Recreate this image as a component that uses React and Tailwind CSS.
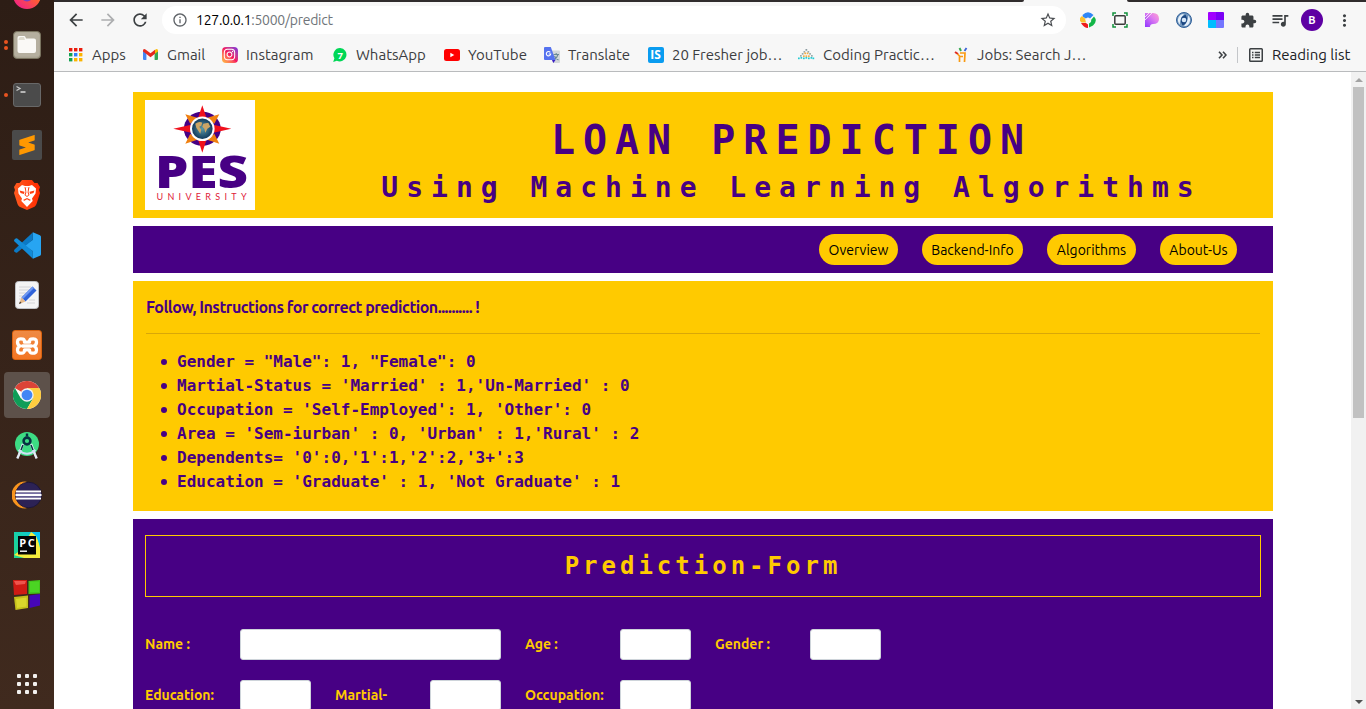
import React from "react";
import { MdArrowBack, MdArrowForward, MdRefresh, MdInfoOutline, MdStarBorder, MdExtension, MdQueueMusic, MdMoreVert } from "react-icons/md";
import { SiBrave, SiXampp, SiSublimetext } from "react-icons/si";
import { FaInstagram } from "react-icons/fa";

const UI = "font-['Ubuntu','Open_Sans',sans-serif]";
const MONO = "font-['DejaVu_Sans_Mono',monospace]";

/* ---------- Dock ---------- */

function DockItem({ dots = 0, active = false, children }) {
  return (
    <div className="flex h-[50px] w-[54px] shrink-0 items-center">
      <div className="flex w-1 flex-col items-end gap-[2px]">
        {Array.from({ length: dots }).map((_, i) => (
          <span key={i} className="-mr-[4px] size-1 rounded-full bg-[#e95420]" />
        ))}
      </div>
      <div className={active ? "-z-0 flex size-[46px] items-center justify-center rounded-[4px] bg-[#5d514a]" : "flex size-[46px] items-center justify-center"}>
        {children}
      </div>
    </div>
  );
}

function ChromeLogo() {
  return (
    <svg width="28" height="28" viewBox="0 0 48 48">
      <circle cx="24" cy="24" r="24" fill="#fff" />
      <path d="M24 24L3.2 12A24 24 0 0 1 44.8 12H24Z" fill="#db4437" />
      <path d="M3.2 12A24 24 0 0 0 24 48L34.4 30L24 24L13.6 30Z" fill="#0f9d58" />
      <path d="M24 48A24 24 0 0 0 44.8 12H24L34.4 30Z" fill="#ffcd40" />
      <circle cx="24" cy="24" r="11.5" fill="#f1f1f1" />
      <circle cx="24" cy="24" r="9.2" fill="#4285f4" />
    </svg>
  );
}

function Dock() {
  return (
    <aside className="flex h-full w-[54px] shrink-0 flex-col overflow-hidden bg-linear-to-b from-[#2d1d15] to-[#402a1e]">
      <div className="flex h-5 shrink-0 items-end justify-center pb-[11px]">
        <svg width="28" height="28" viewBox="0 0 28 28">
          <defs>
            <linearGradient id="ff" x1="1" y1="0" x2="0.2" y2="1">
              <stop offset="0" stopColor="#ffd43a" />
              <stop offset="0.5" stopColor="#ff5a36" />
              <stop offset="1" stopColor="#f0208a" />
            </linearGradient>
          </defs>
          <circle cx="14" cy="14" r="14" fill="url(#ff)" />
          <circle cx="14" cy="14.500" r="6" fill="#7542c5" />
        </svg>
      </div>
      <DockItem dots={2}>
        <svg width="28" height="28" viewBox="0 0 28 28">
          <rect x="0.500" y="0.500" width="27" height="27" rx="3.500" fill="#aaa493" stroke="#79735f" />
          <rect x="1.500" y="1.500" width="25" height="24" rx="3" fill="#b5af9f" />
          <path d="M6 5h5q1 0 1.500 1.200L13 7.500h8q2 0 2 2V20q0 2-2 2H6.500Q4.500 22 4.500 20V7Q4.500 5 6 5Z" fill="#faf9f6" />
          <path d="M5.500 8.500Q5.500 6 7.500 6H11L12 9H5.500Z" fill="#dfdccf" />
        </svg>
      </DockItem>
      <DockItem dots={1}>
        <svg width="28" height="26" viewBox="0 0 28 26">
          <rect x="0.500" y="1.500" width="27" height="23" rx="2.500" fill="#4b4b4b" stroke="#686868" />
          <path d="M3.500 4.500L7 6.500L3.500 8.500" fill="none" stroke="#c8c8c8" strokeWidth="1.300" />
          <path d="M7.500 10h5" stroke="#fff" strokeWidth="1.200" />
        </svg>
      </DockItem>
      <DockItem>
        <div className="flex size-[30px] items-center justify-center rounded-[2px] bg-[#4a4a4a]">
          <SiSublimetext size={20} color="#ff9800" />
        </div>
      </DockItem>
      <DockItem>
        <svg width="26" height="30" viewBox="0 0 26 30">
          <defs>
            <linearGradient id="br" x1="0" x2="1">
              <stop offset="0" stopColor="#ff5a1f" />
              <stop offset="1" stopColor="#ff2b00" />
            </linearGradient>
          </defs>
          <path d="M8 0h10l2.500 3L23.500 3L26 7l-1 3l1 3l-3.500 11q-.6 1.700-2 2.700L13 30l-7.500-3.300q-1.400-1-2-2.700L0 13l1-3L0 7l2.500-4l3 0Z" fill="url(#br)" />
          <path d="M4 8.500L8 5l3 1h4l3-1l4 3.500l-.5 5l-3.500 5l.7 2.500L13 27l-5.700-6l.7-2.500l-3.500-5Z" fill="#fff" />
          <path d="M5.500 10.500l5 1.200l-.5 2.300l-3.500-1ZM20.500 10.500l-5 1.200l.5 2.300l3.500-1ZM10.500 7l2.500 1l2.500-1l-1 5l1 3l-2.500 2l-2.500-2l1-3ZM9 20l4-2l4 2l-1.500.8L13 19.300l-2.500 1.500Z" fill="#ff4012" />
          <path d="M11.800 7.500L13 8l1.200-.5l-.6 5l.8 2.500L13 16l-1.400-1l.8-2.500Z" fill="#fff" />
        </svg>
      </DockItem>
      <DockItem>
        <svg width="27" height="27" viewBox="0 0 100 100">
          <path d="M70 1L96 12Q100 14 100 18V82Q100 86 96 88L70 99V71L37 50L70 29Z" fill="#27a5f2" />
          <path d="M70 1V29L12 76Q9 78 6 76L1 71Q-1 68 2 65Z" fill="#0b79c5" />
          <path d="M70 99V71L12 24Q9 22 6 24L1 29Q-1 32 2 35Z" fill="#128bd8" />
        </svg>
      </DockItem>
      <DockItem>
        <svg width="24" height="28" viewBox="0 0 24 28">
          <rect x="0.500" y="0.500" width="23" height="27" rx="3" fill="#f4f4f5" stroke="#bfc1c6" />
          <path d="M4 6h12M4 9h11M4 12h8M4 15h6M4 18h5M12 22h8M14 19h6" stroke="#d4d4d8" strokeWidth="1" />
          <path d="M17.500 5.500L21.500 9.500L10.500 20.500L6.500 16.500Z" fill="#2f62d9" />
          <path d="M17.500 5.500L19 7L8 18L6.500 16.500Z" fill="#6f98f2" />
          <path d="M6.500 16.500L10.500 20.500L4 23Z" fill="#e7b98a" />
          <path d="M5 20.500L6.500 22L4 23Z" fill="#333" />
        </svg>
      </DockItem>
      <DockItem>
        <div className="flex size-[30px] items-center justify-center rounded-[3px] border border-[#d9620f] bg-linear-to-b from-[#ef8a43] to-[#f37623] pt-px">
          <svg width="24" height="22" viewBox="0 0 24 22">
            <path d="M8 4.200Q2.500 3 2.500 7Q2.500 10 5 11Q2.500 12 2.500 15Q2.500 19 8 17.800Q9.500 17.400 9.500 14.800H14.500Q14.500 17.400 16 17.800Q21.500 19 21.500 15Q21.500 12 19 11Q21.500 10 21.500 7Q21.500 3 16 4.200Q14.500 4.600 14.500 7.200H9.500Q9.500 4.600 8 4.200ZM7.500 11H16.500" fill="none" stroke="#fff" strokeWidth="3.300" strokeLinejoin="round" strokeLinecap="round" />
          </svg>
        </div>
      </DockItem>
      <DockItem dots={1} active>
        <ChromeLogo />
      </DockItem>
      <DockItem>
        <svg width="26" height="28" viewBox="0 0 26 28">
          <circle cx="13" cy="13" r="12" fill="#3ddc84" />
          <path d="M9 13L5 23.500L3.300 27.500M17 13L21 23.500L22.700 27.500" stroke="#e4ecf7" strokeWidth="2.400" fill="none" />
          <path d="M4.500 19Q13 26.500 21.500 19" stroke="#d0e0f5" strokeWidth="2" fill="none" />
          <path d="M11.800 2.500h2.400v3h-2.400Z" fill="#073042" />
          <circle cx="13" cy="10" r="3.400" fill="#3ddc84" stroke="#073042" strokeWidth="2.600" />
          <path d="M9 14L7 19M17 14L19 19" stroke="#073042" strokeWidth="1.500" />
        </svg>
      </DockItem>
      <DockItem>
        <svg width="30" height="28" viewBox="0 0 30 28">
          <path d="M13 .5A13.500 13.500 0 0 0 13 27.500L15 27A16 16 0 0 1 15 1Z" fill="#f7941e" />
          <ellipse cx="16.500" cy="14" rx="13" ry="12.800" fill="#2c2255" stroke="#181338" strokeWidth="0.800" />
          <path d="M4 10.500H29M3.500 14H29.500M4 17.500H29" stroke="#fff" strokeWidth="1.900" />
          <path d="M4 12.300H29M4 15.800H29" stroke="#7770a5" strokeWidth="1.200" />
        </svg>
      </DockItem>
      <DockItem>
        <svg width="26" height="26" viewBox="0 0 26 26">
          <defs>
            <linearGradient id="pc" x1="0" y1="1" x2="1" y2="0">
              <stop offset="0" stopColor="#21d789" />
              <stop offset="0.550" stopColor="#16cfae" />
              <stop offset="1" stopColor="#07c3f2" />
            </linearGradient>
          </defs>
          <rect width="26" height="26" fill="url(#pc)" />
          <path d="M17 0L23 4L26 16V26H10L0 23L7 18Z" fill="#f5ed3c" />
          <path d="M18 0H26V13L22 4Z" fill="#07c3f2" />
          <rect x="4" y="4" width="18" height="18.500" fill="#050505" />
          <rect x="6" y="18.500" width="7" height="1.400" fill="#fff" />
          <text x="5.200" y="14.500" fontSize="11" fontWeight="700" textLength="15.500" fill="#fff" className="font-['Open_Sans',sans-serif]">PC</text>
        </svg>
      </DockItem>
      <DockItem>
        <svg width="28" height="30" viewBox="0 0 28 30">
          <path d="M0 0L14 0V14L1 15Z" fill="#cf1b14" />
          <path d="M1 1L13 1L12 4L3 5Z" fill="#ef554c" />
          <path d="M15.500 1L27 0V13.500L15.500 14Z" fill="#43c51c" />
          <path d="M17 2L26 1.500V12L17 12Z" fill="#4bd523" />
          <path d="M1 17L15 15.500V28L2.500 30Z" fill="#c3bf1b" />
          <path d="M3 19L13.500 17.500V26.500L4 28Z" fill="#d9d62c" />
          <path d="M16.500 15.500L27 14V25.500L16.500 28Z" fill="#4606b8" />
        </svg>
      </DockItem>
      <div className="mt-auto flex justify-center pb-[15px]">
        <div className="grid grid-cols-3 gap-x-[4px] gap-y-[4px]">
          {Array.from({ length: 9 }).map((_, i) => (
            <span key={i} className="size-[4px] rounded-[1px] bg-[#f2f0ee]" />
          ))}
        </div>
      </div>
    </aside>
  );
}

/* ---------- Browser chrome ---------- */

function Slot({ children }) {
  return <div className="flex w-8 shrink-0 items-center justify-center">{children}</div>;
}

function Toolbar() {
  return (
    <div className="flex h-[36px] items-center pl-[6px]">
      <Slot><MdArrowBack size={20} color="#3c4043" /></Slot>
      <Slot><MdArrowForward size={20} color="#adaeb0" /></Slot>
      <Slot><MdRefresh size={20} color="#3c4043" /></Slot>
      <div className="ml-[6px] flex h-7 w-[904px] shrink-0 items-center rounded-full bg-white pr-[9px] pl-[10px]">
        <MdInfoOutline size={16} color="#5f6368" />
        <span className={`${UI} ml-[8px] text-[14px] leading-5 tracking-[-0.270px] text-[#70757a]`}>
          <span className="text-black">127.0.0.1</span>:5000/predict
        </span>
        <MdStarBorder className="ml-auto" size={18} color="#4a4d51" />
      </div>
      <div className="ml-[6px] flex">
        <Slot>
          <svg width="16" height="16" viewBox="0 0 16 16">
            <path d="M2.500 3Q8-2.500 13.500 3L10 6.500Q8 4.500 6 6.500L3 5Z" fill="#2f86f6" />
            <path d="M14 4.500Q18 9 13 13.500L9 15.500V11.500Q12 10 11 8Z" fill="#12b648" />
            <path d="M0 6Q-.5 9 1.500 10.500H6L5 6.500L2 4Z" fill="#fbc02d" />
            <path d="M1 11H6L8 12.500V16Q4 16 1 11Z" fill="#ef1b1b" />
          </svg>
        </Slot>
        <Slot>
          <svg width="16" height="16" viewBox="0 0 16 16" fill="none">
            <path d="M1 4V1H4M12 1H15V4M15 12V15H12M4 15H1V12" stroke="#12923c" strokeWidth="1.500" />
            <rect x="2.800" y="3.800" width="10.400" height="8.400" rx="1" stroke="#3b3b3b" strokeWidth="1.500" />
          </svg>
        </Slot>
        <Slot>
          <svg width="16" height="16" viewBox="0 0 16 16">
            <defs>
              <linearGradient id="pk" x1="0" y1="1" x2="1" y2="0">
                <stop offset="0" stopColor="#8f35ff" />
                <stop offset="0.600" stopColor="#df7df0" />
                <stop offset="1" stopColor="#ffa2cf" />
              </linearGradient>
            </defs>
            <path d="M1 1H9Q15 1 15 7Q15 12 9 12Q6 12 6 15H1Z" fill="url(#pk)" />
            <path d="M1 5L5 1M1 8L8 1" stroke="#f7f7f7" strokeWidth="0.800" />
          </svg>
        </Slot>
        <Slot>
          <svg width="16" height="16" viewBox="0 0 16 16">
            <circle cx="8" cy="8" r="7.500" fill="#7196bd" stroke="#2f5f99" />
            <path d="M8 2A6 6 0 0 0 4 12.500Q3 8 8 2ZM8 14A6 6 0 0 0 12 3.500Q13 8 8 14Z" fill="#e6f0fa" />
            <path d="M9.500 2.500Q2 6 6.500 13.500Q14 10 9.500 2.500Z" fill="#194682" />
            <circle cx="8" cy="8" r="2.300" fill="#d6e6f7" />
          </svg>
        </Slot>
        <Slot>
          <div className="grid size-4 grid-cols-2 overflow-hidden rounded-[1px]">
            <span className="bg-[#a100ff]" />
            <span className="bg-[#7b00f5]" />
            <span className="bg-[#00bdff]" />
            <span className="bg-[#7476ff]" />
          </div>
        </Slot>
        <Slot><MdExtension size={17} color="#3c4043" /></Slot>
        <Slot><MdQueueMusic size={20} color="#3c4043" /></Slot>
        <Slot>
          <div className={`${UI} flex size-[22px] items-center justify-center rounded-full bg-[#5e00a3] text-[11px] font-semibold text-white`}>B</div>
        </Slot>
        <Slot><MdMoreVert size={19} color="#3c4043" /></Slot>
      </div>
    </div>
  );
}

function AppsIcon() {
  const colors = ["#ea1c0d", "#ea1c0d", "#ea1c0d", "#12a150", "#2f7df6", "#fbb400", "#12a150", "#fbb400", "#fbb400"];
  return (
    <svg width="14" height="14" viewBox="0 0 14 14">
      {colors.map((c, i) => (
        <rect key={i} x={(i % 3) * 5} y={Math.floor(i / 3) * 5} width="3.400" height="3.400" fill={c} />
      ))}
    </svg>
  );
}

function GmailIcon() {
  return (
    <svg width="15" height="11" viewBox="0 0 15 11">
      <path d="M0 1.500V10Q0 11 1 11H3.400V4.500Z" fill="#4285f4" />
      <path d="M15 1.500V10Q15 11 14 11H11.600V4.500Z" fill="#34a853" />
      <path d="M11.600 1.200V5L15 2.600V1.800Q15-.8 12.500.4Z" fill="#fbbc04" />
      <path d="M0 1.800Q0-.8 2.500.4L7.500 4.200L12 .7V4.700L7.500 8.200L3.400 5L0 2.600Z" fill="#e5291d" />
    </svg>
  );
}

function InstagramIcon() {
  return (
    <span className="flex size-4 items-center justify-center rounded-[4px] bg-linear-to-tr from-[#ffc037] via-[#f5135f] to-[#7a1fe0]">
      <FaInstagram size={13} color="#fff" />
    </span>
  );
}

function WhatsAppIcon() {
  return (
    <svg width="14" height="14" viewBox="0 0 14 14">
      <path d="M7.200 0A6.700 6.700 0 1 1 3.800 12.700L.2 14L1.400 10.200A6.700 6.700 0 0 1 7.200 0Z" fill="#00d757" />
      <text x="4.500" y="10.500" fontSize="9.500" fontWeight="700" fill="#fff" className="font-['Open_Sans',sans-serif]">7</text>
    </svg>
  );
}

function YouTubeIcon() {
  return (
    <svg width="16" height="12" viewBox="0 0 16 12">
      <rect width="16" height="12" rx="2.500" fill="#f00" />
      <path d="M6.300 3.700L10.300 6L6.300 8.300Z" fill="#fff" />
    </svg>
  );
}

function TranslateIcon() {
  return (
    <svg width="16" height="16" viewBox="0 0 16 16">
      <path d="M6 3.500H15Q16 3.500 16 4.500V15Q16 16 15 16H9Z" fill="#d3d7d9" />
      <path d="M9.500 7.500H15M12.200 6V7.500M14 7.500Q13 11 10 13M10.500 9Q12 12 14.500 13" stroke="#6b8a94" strokeWidth="1.100" fill="none" />
      <path d="M8 13H11.500L9.300 16Z" fill="#3a1fc5" />
      <path d="M1 0H6.800L11.500 13H1Q0 13 0 12V1Q0 0 1 0Z" fill="#5572ef" />
      <path d="M6.300 5.400A2.200 2.200 0 1 0 6.700 7H4.700" stroke="#fff" strokeWidth="1.100" fill="none" />
    </svg>
  );
}

function InternIcon() {
  return (
    <span className="flex size-4 items-center justify-center rounded-[2px] bg-[#0a9cf0] font-['Open_Sans',sans-serif] text-[12px] leading-4 font-bold text-white">IS</span>
  );
}

function CodingIcon() {
  const dots = [
    [7.5, 0, "#8a9aa0"], [5.500, 2, "#9aa"], [9.500, 2, "#9aa"],
    [3.800, 4, "#9aa"], [6.300, 3.500, "#f2ae4a"], [8.700, 3.500, "#f2ae4a"], [11.200, 4, "#9aa"],
    [2, 6, "#9aa"], [5, 6.300, "#f2ae4a"], [7.500, 6.300, "#f2ae4a"], [10, 6.300, "#f2ae4a"], [13, 6, "#9aa"],
    [0, 8.500, "#22cbd3"], [2.500, 8, "#22cbd3"], [5, 8.500, "#22cbd3"], [7.500, 8, "#22cbd3"], [10, 8.500, "#22cbd3"], [12.500, 8, "#22cbd3"], [14.500, 8.500, "#22cbd3"],
  ];
  return (
    <svg width="17" height="11" viewBox="0 0 17 11">
      {dots.map(([x, y, c], i) => <rect key={i} x={x} y={y} width="1.700" height="1.700" fill={c} />)}
    </svg>
  );
}

function JobsIcon() {
  return (
    <svg width="14" height="16" viewBox="0 0 14 16" fill="none">
      <path d="M1 5L4 7" stroke="#df2b20" strokeWidth="2" />
      <path d="M5.500 1L7 4" stroke="#36a852" strokeWidth="2" />
      <path d="M12.500 1L10.500 4" stroke="#3b63d8" strokeWidth="1.800" />
      <path d="M3.500 7L5.500 9L5.500 15M6 6H11L10.500 15M6 9.500H9" stroke="#f99a12" strokeWidth="1.700" />
    </svg>
  );
}

const bookmarks = [
  { label: "Apps", icon: <AppsIcon />, box: "w-[75px]", track: "tracking-[0px]" },
  { label: "Gmail", icon: <GmailIcon />, box: "w-[79px]", track: "tracking-[0px]" },
  { label: "Instagram", icon: <InstagramIcon />, box: "w-[110px]", track: "tracking-[0px]" },
  { label: "WhatsApp", icon: <WhatsAppIcon />, box: "w-[112px]", track: "tracking-[0px]" },
  { label: "YouTube", icon: <YouTubeIcon />, box: "w-[100px]", track: "tracking-[0px]" },
  { label: "Translate", icon: <TranslateIcon />, box: "w-[104px]", track: "tracking-[0px]" },
  { label: "20 Fresher job…", icon: <InternIcon />, box: "w-[151px]", track: "tracking-[0px]" },
  { label: "Coding Practic…", icon: <CodingIcon />, box: "w-[154px]", track: "tracking-[0px]" },
  { label: "Jobs: Search J…", icon: <JobsIcon />, box: "w-[150px]", track: "tracking-[0px]" },
];

function BookmarksBar() {
  return (
    <div className={`${UI} flex h-[33px] items-center pl-[13px] text-[15px] leading-5 text-[#3c3d3f]`}>
      {bookmarks.map((b) => (
        <div key={b.label} className={`${b.box} flex shrink-0 items-center whitespace-nowrap`}>
          <span className="mr-[8px] flex w-[17px] shrink-0 justify-center">{b.icon}</span>
          <span className={b.track}>{b.label}</span>
        </div>
      ))}
      <div className="ml-auto flex items-center pr-[14px]">
        <svg width="9" height="8" viewBox="0 0 9 8" fill="none" stroke="#3c4043" strokeWidth="1.600">
          <path d="M1 .8L4 4L1 7.200M5 .8L8 4L5 7.200" />
        </svg>
        <span className="ml-[10px] h-4 w-px bg-[#c4c6c9]" />
        <svg className="ml-[11px]" width="14" height="14" viewBox="0 0 14 14" fill="none" stroke="#3c4043">
          <rect x="0.750" y="0.750" width="12.500" height="12.500" rx="0.800" strokeWidth="1.500" />
          <path d="M3 4.500H4.500M5.800 4.500H11M3 7H4.500M5.800 7H11M3 9.500H4.500M5.800 9.500H11" strokeWidth="1.300" />
        </svg>
        <span className="ml-[9px] w-[80px] whitespace-nowrap text-[#202124] tracking-[0px]">Reading list</span>
      </div>
    </div>
  );
}

function Scrollbar() {
  return (
    <div className="flex w-[15px] shrink-0 flex-col items-center bg-[#f1f1f1]">
      <div className="flex h-[15px] items-center justify-center">
        <svg width="8" height="4" viewBox="0 0 8 4"><path d="M0 4L4 0L8 4Z" fill="#a3a3a3" /></svg>
      </div>
      <div className="h-[331px] w-[11px] bg-[#c1c1c1]" />
      <div className="mt-auto flex h-[15px] items-center justify-center">
        <svg width="8" height="4" viewBox="0 0 8 4"><path d="M0 0L4 4L8 0Z" fill="#505050" /></svg>
      </div>
    </div>
  );
}

/* ---------- Page ---------- */

function PesLogo() {
  return (
    <svg className="block bg-white" width="110" height="110" viewBox="0 0 110 110">
      <defs>
        <radialGradient id="globe">
          <stop offset="0" stopColor="#5b9aa8" />
          <stop offset="1" stopColor="#123a5c" />
        </radialGradient>
      </defs>
      <g transform="translate(57.300 28.700)">
        <ellipse rx="18.500" ry="17" fill="#470084" />
        <path d="M-17 -14.500L-5 -11L-12 -5ZM17 -14.500L5 -11L12 -5ZM-17 15L-5 11L-12 5ZM17 15L5 11L12 5Z" fill="#f08010" />
        <path d="M0 -23.500L4.500 -10H-4.500ZM0 24L4.500 10H-4.500ZM-29 0L-11 -4V4ZM29 0L11 -4V4Z" fill="#f0101c" />
        <circle r="12.300" fill="#fff" />
        <circle r="10.300" fill="url(#globe)" />
        <path d="M-7 -5Q-3 -8 0 -6L-1 -3L-3 -2L-1 1L-2 5L-4 2L-6 -1ZM1 -5L6 -6L8 -2L5 0L3 4L2 0L0 -2Z" fill="#cda565" />
      </g>
      <text x="10" y="88" fontSize="44" fontWeight="800" textLength="93" lengthAdjust="spacingAndGlyphs" fill="#470084" className="font-['Open_Sans',sans-serif]">PES</text>
      <text x="11.500" y="100" fontSize="9" textLength="90" fill="#e02038" className="font-['Lato',sans-serif]">UNIVERSITY</text>
    </svg>
  );
}

function Header() {
  return (
    <header className="flex h-[126px] bg-[#ffca00] px-3 pt-2 text-[#470084]">
      <PesLogo />
      <div className={`${MONO} ml-[67px] flex flex-1 flex-col items-center pt-4 font-bold whitespace-nowrap`}>
        <h1 className="text-[40px] leading-[48px] tracking-[8px]">LOAN PREDICTION</h1>
        <h2 className="text-[28px] leading-[34px] tracking-[8px] mt-[7px]">Using Machine Learning Algorithms</h2>
      </div>
    </header>
  );
}

const links = [
  { label: "Overview", box: "w-[79px]", track: "tracking-[0px]" },
  { label: "Backend-Info", box: "w-[101px]", track: "tracking-[0px]" },
  { label: "Algorithms", box: "w-[89px]", track: "tracking-[0px]" },
  { label: "About-Us", box: "w-[77px]", track: "tracking-[0px]" },
];

function Nav() {
  return (
    <nav className="mt-2 flex h-[47px] items-center justify-end gap-6 bg-[#470084] pr-9">
      {links.map((l) => (
        <a key={l.label} className={`${UI} ${l.box} ${l.track} flex h-[31px] items-center justify-center rounded-full bg-[#ffca00] text-[14px] leading-5 whitespace-nowrap text-black`}>
          {l.label}
        </a>
      ))}
    </nav>
  );
}

const rules = [
  "Gender = \"Male\": 1, \"Female\": 0",
  "Martial-Status = 'Married' : 1,'Un-Married' : 0",
  "Occupation = 'Self-Employed': 1, 'Other': 0",
  "Area = 'Sem-iurban' : 0, 'Urban' : 1,'Rural' : 2",
  "Dependents= '0':0,'1':1,'2':2,'3+':3",
  "Education = 'Graduate' : 1, 'Not Graduate' : 1",
];

function Instructions() {
  return (
    <section className="mt-2 h-[230px] bg-[#ffca00] px-[13px] pt-[14px] text-[#470084]">
      <p className={`${UI} text-[16px] leading-6 font-bold tracking-[-0.500px] whitespace-nowrap`}>Follow, Instructions for correct prediction.......... !</p>
      <div className="mt-[14px] h-px bg-[#d9a708]" />
      <ul className={`${MONO} mt-4 text-[16px] leading-6 font-bold`}>
        {rules.map((r) => (
          <li key={r} className="flex items-center whitespace-pre">
            <span className="mr-[10px] ml-[15px] size-[6px] rounded-full bg-[#470084]" />
            {r}
          </li>
        ))}
      </ul>
    </section>
  );
}

function Field({ label, wide = false, track = "" }) {
  return (
    <div className="flex">
      <span className={`${UI} ${track} w-[95px] shrink-0 pt-[5px] pr-6 text-[14px] leading-[21px] font-bold text-[#ffca00]`}>{label}</span>
      <input aria-label={label} className={wide ? "mr-6 h-[31px] w-[261px] rounded-[3px] border border-[#ced4da] bg-white" : "mr-6 h-[31px] w-[71px] rounded-[3px] border border-[#ced4da] bg-white"} />
    </div>
  );
}

function PredictionForm() {
  return (
    <section className="mt-2 bg-[#470084] px-3 pt-4 pb-40">
      <div className="flex h-[62px] items-center justify-center border border-[#ffca00]">
        <h3 className={`${MONO} text-[24px] leading-[29px] font-bold tracking-[4px] text-[#ffca00]`}>Prediction-Form</h3>
      </div>
      <div className="mt-8 flex">
        <Field label="Name :" wide track="tracking-[0px]" />
        <Field label="Age :" track="tracking-[0px]" />
        <Field label="Gender :" track="tracking-[0px]" />
      </div>
      <div className="mt-5 flex">
        <Field label="Education:" track="tracking-[0px]" />
        <Field label="Martial- Status:" track="tracking-[0px]" />
        <Field label="Occupation:" track="tracking-[0px]" />
      </div>
    </section>
  );
}

export default function App() {
  return (
    <div className="flex h-[709px] w-[1366px] overflow-hidden bg-white">
      <Dock />
      <div className="flex min-w-0 flex-1 flex-col">
        <div className="h-[72px] shrink-0 border-b border-[#b9bbbd] bg-[#f7f7f7]">
          <div className="flex h-[2px] justify-between">
            <div className="w-[970px] rounded-br-[3px] bg-[#302c2d]" />
            <div className="w-[239px] rounded-bl-[3px] bg-[#302c2d]" />
          </div>
          <Toolbar />
          <BookmarksBar />
        </div>
        <div className="flex min-h-0 flex-1">
          <main className="min-w-0 flex-1 overflow-hidden pt-5 pl-[79px]">
            <div className="w-[1140px]">
              <Header />
              <Nav />
              <Instructions />
              <PredictionForm />
            </div>
          </main>
          <Scrollbar />
        </div>
      </div>
    </div>
  );
}
